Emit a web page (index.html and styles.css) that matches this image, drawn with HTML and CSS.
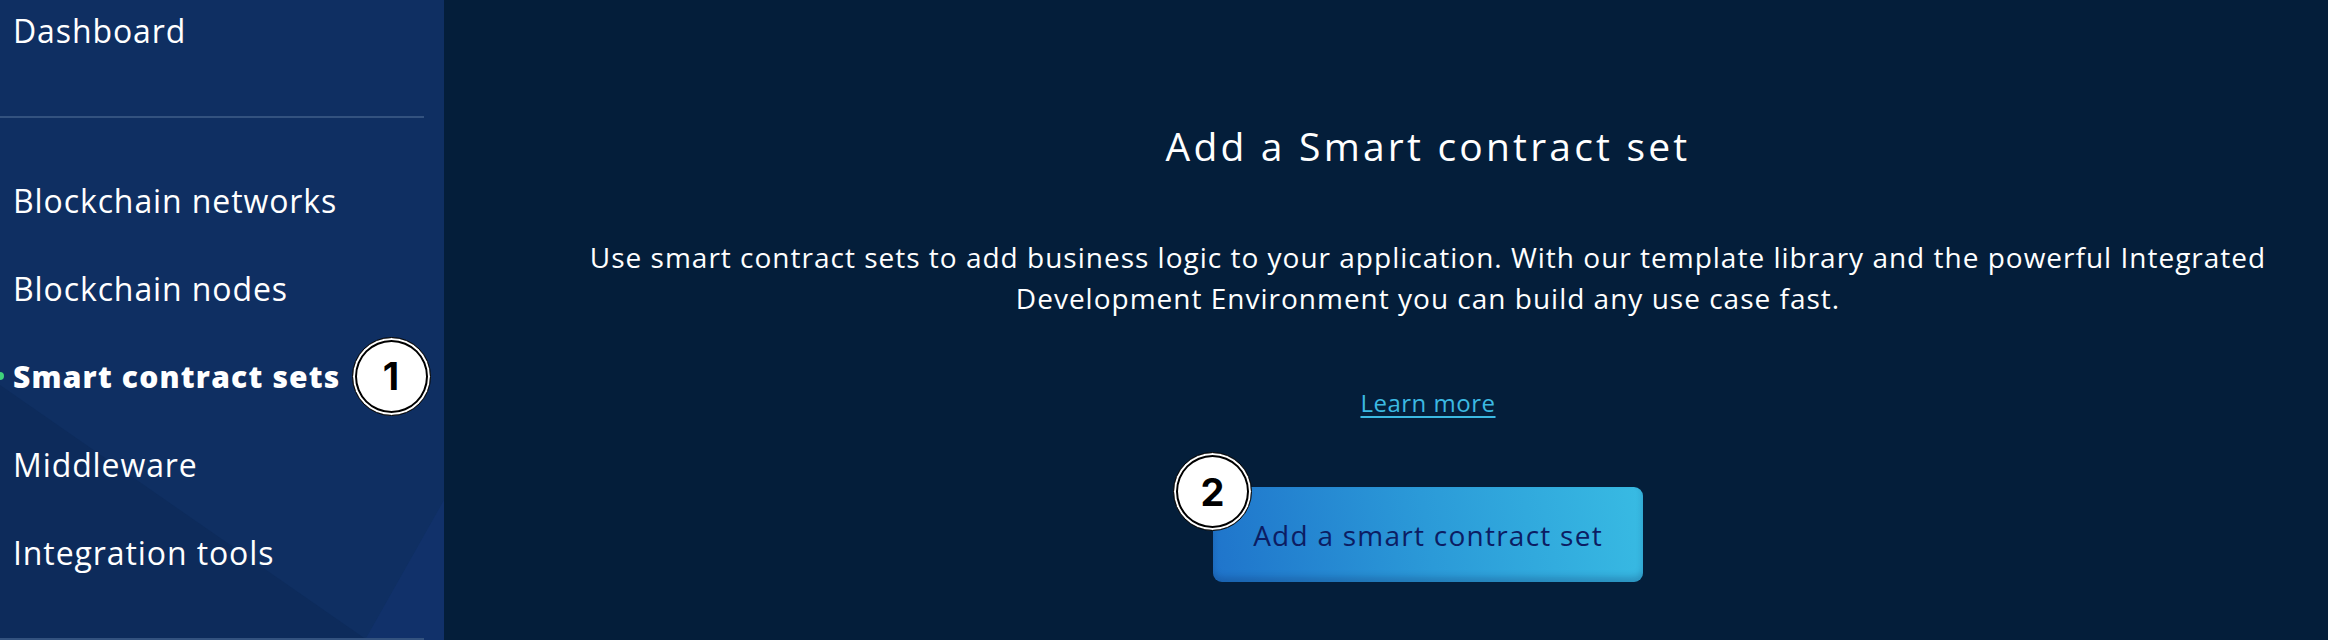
FILE: index.html
```html
<!DOCTYPE html>
<html lang="en">
<head>
<meta charset="utf-8">
<title>Add a Smart contract set</title>
<link rel="stylesheet" href="styles.css">
</head>
<body>
<div class="app">
  <aside class="sidebar">
    <div class="sidebar-top">
      <a class="nav-link" href="#">Dashboard</a>
    </div>
    <div class="divider"></div>
    <nav class="nav">
      <a class="nav-item" href="#"><span class="nav-link">Blockchain networks</span></a>
      <a class="nav-item" href="#"><span class="nav-link">Blockchain nodes</span></a>
      <a class="nav-item active" href="#"><span class="dot"></span><span class="nav-link">Smart contract sets</span><span class="badge">1</span></a>
      <a class="nav-item" href="#"><span class="nav-link">Middleware</span></a>
      <a class="nav-item" href="#"><span class="nav-link">Integration tools</span></a>
    </nav>
    <div class="divider divider-bottom"></div>
  </aside>
  <main class="main">
    <h1 class="title">Add a Smart contract set</h1>
    <p class="lead">Use smart contract sets to add business logic to your application. With our template library and the powerful Integrated Development Environment you can build any use case fast.</p>
    <a class="learn" href="#">Learn more</a>
    <div class="cta-wrap">
      <button class="cta" type="button">Add a smart contract set</button>
      <span class="badge badge-cta">2</span>
    </div>
  </main>
</div>
</body>
</html>
```

FILE: styles.css
```css
* { box-sizing: border-box; }
html, body { margin: 0; padding: 0; height: 100%; }
body {
  background: #041e3a;
  font-family: "Open Sans", "Noto Sans", sans-serif;
  color: #fff;
  overflow: hidden;
}
.app {
  display: flex;
  height: 640px;
}
.sidebar {
  position: relative;
  width: 444px;
  flex: none;
  background: #0f2f62;
  display: flex;
  flex-direction: column;
  overflow: hidden;
}
.sidebar::before {
  content: "";
  position: absolute;
  inset: 0;
  background: #0d2b5b;
  clip-path: polygon(0 385px, 367px 640px, 0 640px);
}
.sidebar::after {
  content: "";
  position: absolute;
  inset: 0;
  background: #11316a;
  clip-path: polygon(444px 500px, 444px 640px, 365px 640px);
}
.sidebar > * { position: relative; z-index: 1; }
.sidebar-top {
  padding: 11px 0 0 13px;
  height: 51px;
  font-size: 32px;
  line-height: 40px;
}
.nav-link {
  color: #fff;
  text-decoration: none;
  font-size: 32px;
  font-weight: 500;
  letter-spacing: 0.9px;
  white-space: nowrap;
}
.divider {
  flex: none;
  height: 2px;
  width: 424px;
  margin-top: 65px;
  background: #33527f;
}
.nav {
  display: flex;
  flex-direction: column;
  margin-top: 38px;
}
.nav-item {
  position: relative;
  height: 88px;
  display: flex;
  align-items: center;
  gap: 11px;
  padding-left: 13px;
  text-decoration: none;
}
.nav-item.active .nav-link {
  font-weight: 800;
  font-size: 30px;
  letter-spacing: 1.2px;
}
.dot {
  position: absolute;
  left: -4px;
  top: 40px;
  width: 8px;
  height: 8px;
  border-radius: 50%;
  background: #3fd27a;
}
.divider-bottom { margin-top: 42px; }
.badge {
  width: 79px;
  height: 79px;
  flex: none;
  border-radius: 50%;
  background: #fff;
  border: 1.5px solid #000;
  box-shadow: inset 0 0 0 2px #fff, inset 0 0 0 4px #000;
  display: flex;
  align-items: center;
  justify-content: center;
  font-family: Inter, "Liberation Sans", sans-serif;
  font-weight: 700;
  font-size: 38px;
  color: #000;
  line-height: 1;
}
.main {
  flex: 1;
  display: flex;
  flex-direction: column;
  align-items: center;
  padding: 121px 0 0 84px;
  text-align: center;
}
.title {
  margin: 0;
  font-weight: 400;
  font-size: 39px;
  line-height: 50px;
  letter-spacing: 3.2px;
}
.lead {
  margin: 66px 0 0;
  max-width: 1760px;
  font-size: 28px;
  line-height: 41px;
  letter-spacing: 1px;
}
.learn {
  margin-top: 68px;
  font-size: 24px;
  line-height: 32px;
  letter-spacing: 0.5px;
  color: #3cb9e2;
  text-decoration: underline;
  text-underline-offset: 4px;
  text-decoration-thickness: 2px;
}
.cta-wrap {
  position: relative;
  margin-top: 68px;
}
.cta {
  width: 430px;
  height: 95px;
  border: 0;
  border-radius: 9px;
  background: linear-gradient(80deg, #1f74cb 0%, #2b9ad8 50%, #38bbe3 100%);
  box-shadow: inset 0 -5px 6px rgba(10, 40, 90, 0.25);
  color: #0c1d63;
  font-family: "Open Sans", "Noto Sans", sans-serif;
  font-size: 28px;
  letter-spacing: 1.25px;
  padding: 0;
}
.badge-cta {
  position: absolute;
  left: -40px;
  top: -35px;
}
```
